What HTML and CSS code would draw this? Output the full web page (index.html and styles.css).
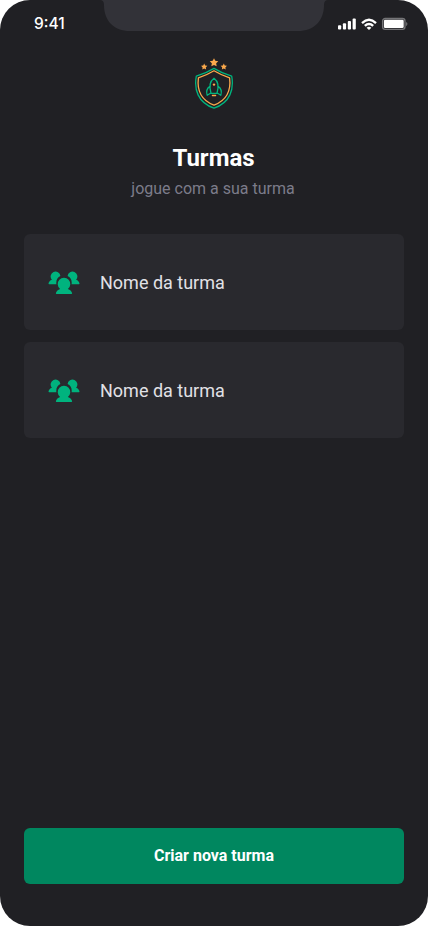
FILE: index.html
```html
<!DOCTYPE html>
<html lang="pt-BR">
<head>
<meta charset="utf-8">
<meta name="viewport" content="width=device-width, initial-scale=1">
<title>Turmas</title>
<link rel="stylesheet" href="styles.css">
</head>
<body>
<svg class="sprite" aria-hidden="true">
  <symbol id="users" viewBox="0 0 32 32">
    <path d="M8.400 18.300H1.100Q.5 18.300.5 17.600C.9 15.600 2 14.400 3.900 13.700A4.900 4.900 0 1 1 12.400 9.900C9.600 11.200 7.800 13.800 8.400 18.300Z"/>
    <path d="M23.600 18.300h7.300q.6 0 .6-.7c-.4-2-1.500-3.200-3.400-3.900A4.900 4.900 0 1 0 19.600 9.900c2.800 1.300 4.600 3.900 4 8.400Z"/>
    <path d="M12.100 23a6.300 6.300 0 1 1 7.800 0c2.200.8 3.600 2 4.200 4.100q.2.900-.7.900H8.600q-.9 0-.7-.9c.6-2.100 2-3.300 4.200-4.100Z"/>
  </symbol>
</svg>
<div class="screen">
  <header class="status">
    <time class="clock">9:41</time>
    <svg class="notch" width="228" height="31" viewBox="0 0 228 31"><path d="M0 0Q4 0 4 5C4 21 14 31 30 31H198C214 31 224 21 224 5Q224 0 228 0Z"/></svg>
    <svg class="indicators" width="70" height="14" viewBox="0 0 70 14" fill="#fff">
      <rect x="0" y="8.300" width="3.200" height="4.200" rx=".9"/>
      <rect x="4.900" y="6.300" width="3.200" height="6.200" rx=".9"/>
      <rect x="9.800" y="4" width="3.200" height="8.500" rx=".9"/>
      <rect x="14.600" y="1.500" width="3.200" height="11" rx=".9"/>
      <path d="M23.200 5.200Q31 -2 38.800 5.200L37.200 6.900Q31 1.100 24.800 6.900ZM26 8.100Q31 3.500 36 8.100L34.300 9.800Q31 6.900 27.700 9.800ZM28.600 10.700Q31 8.800 33.400 10.700L31 13Z"/>
      <rect x="44.600" y="1.500" width="22.400" height="10.900" rx="2.600" fill="none" stroke="#fff" stroke-width="1.300" stroke-opacity=".38"/>
      <rect x="45.900" y="2.800" width="19.800" height="8.300" rx="1.300"/>
      <path d="M68.200 5v4Q69.400 8.500 69.400 7T68.200 5Z" fill-opacity=".4"/>
    </svg>
  </header>
  <main class="content">
    <svg class="logo" width="40" height="52" viewBox="0 0 40 52" fill="none" stroke-width="1.300" stroke-linejoin="round" stroke-linecap="round">
      <g fill="#fba94c">
        <path d="m20 .2 1.300 2.650 3 .4-2.150 2.100.5 3L20 6.950l-2.650 1.400.5-3-2.150-2.100 3-.4Z"/>
        <path d="m10.200 5.600.95 1.950 2.200.3-1.600 1.550.4 2.200-1.950-1.050-1.950 1.050.4-2.200-1.600-1.550 2.200-.3Z"/>
        <path d="m29.800 5.600.95 1.950 2.200.3-1.600 1.550.4 2.200-1.950-1.050-1.950 1.050.4-2.200-1.600-1.550 2.200-.3Z"/>
      </g>
      <g stroke="#00b37e">
        <path d="M20 10.400Q28 15.300 37.700 18.200C40 31 36.500 44.500 20 50.200C3.500 44.500 0 31 2.300 18.200Q12 15.300 20 10.400Z"/>
        <path d="M17 35.300C15.200 29.500 15.400 23.500 20 20.200C24.600 23.500 24.800 29.500 23 35.300ZM15.900 28.400Q11.300 31.500 13.200 37.300L16.800 35M24.100 28.400Q28.700 31.500 26.800 37.300L23.200 35"/>
      </g>
      <g stroke="#fba94c">
        <path d="M20 12.800Q27.500 17.300 35.600 19.900C37 31 33.500 42 20 47.200C6.500 42 3 31 4.400 19.900Q12.500 17.300 20 12.800Z"/>
        <path d="M18.400 37.500h3.200"/>
      </g>
      <circle cx="20" cy="26.600" r="1.200" fill="#fba94c"/>
    </svg>
    <h1 class="title">Turmas</h1>
    <p class="subtitle">jogue com a sua turma</p>
    <ul class="groups">
      <li class="group"><svg class="icon"><use href="#users"/></svg><span>Nome da turma</span></li>
      <li class="group"><svg class="icon"><use href="#users"/></svg><span>Nome da turma</span></li>
    </ul>
    <button class="create">Criar nova turma</button>
  </main>
</div>
</body>
</html>
```
FILE: styles.css
```css
* {
  box-sizing: border-box;
  margin: 0;
  padding: 0;
}

body {
  background: #fff;
  font-family: Roboto, sans-serif;
}

.sprite {
  display: none;
}

.screen {
  display: flex;
  flex-direction: column;
  width: 428px;
  height: 926px;
  overflow: hidden;
  border-radius: 30px;
  background: #202024;
}

.status {
  display: grid;
  grid-template-columns: 100px 228px 100px;
  height: 44px;
}

.clock {
  padding: 14px 0 0 34px;
  color: #fff;
  font: 500 15.500px/20px Inter, sans-serif;
}

.notch {
  fill: #323238;
}

.indicators {
  margin: 17px 0 0 10px;
}

.content {
  display: flex;
  flex: 1;
  flex-direction: column;
  align-items: center;
  padding: 14px 24px 42px;
}

.logo {
  flex: none;
}

.title {
  margin-top: 32px;
  padding-right: 1px;
  color: #fff;
  font-size: 24px;
  font-weight: 700;
  line-height: 32px;
}

.subtitle {
  margin-top: 5px;
  padding-right: 2px;
  color: #7c7c8a;
  font-size: 16px;
  line-height: 20px;
}

.groups {
  display: flex;
  flex-direction: column;
  gap: 12px;
  width: 100%;
  margin-top: 35px;
  list-style: none;
}

.group {
  display: flex;
  align-items: center;
  gap: 20px;
  height: 96px;
  padding: 0 24px;
  border-radius: 6px;
  background: #29292e;
  color: #e1e1e6;
  font-size: 18px;
}

.icon {
  width: 32px;
  height: 32px;
  fill: #00b37e;
}

.create {
  width: 100%;
  height: 56px;
  margin-top: auto;
  padding-bottom: 2px;
  border: 0;
  border-radius: 6px;
  background: #00875f;
  color: #fff;
  font: 700 16px Roboto, sans-serif;
}
```
